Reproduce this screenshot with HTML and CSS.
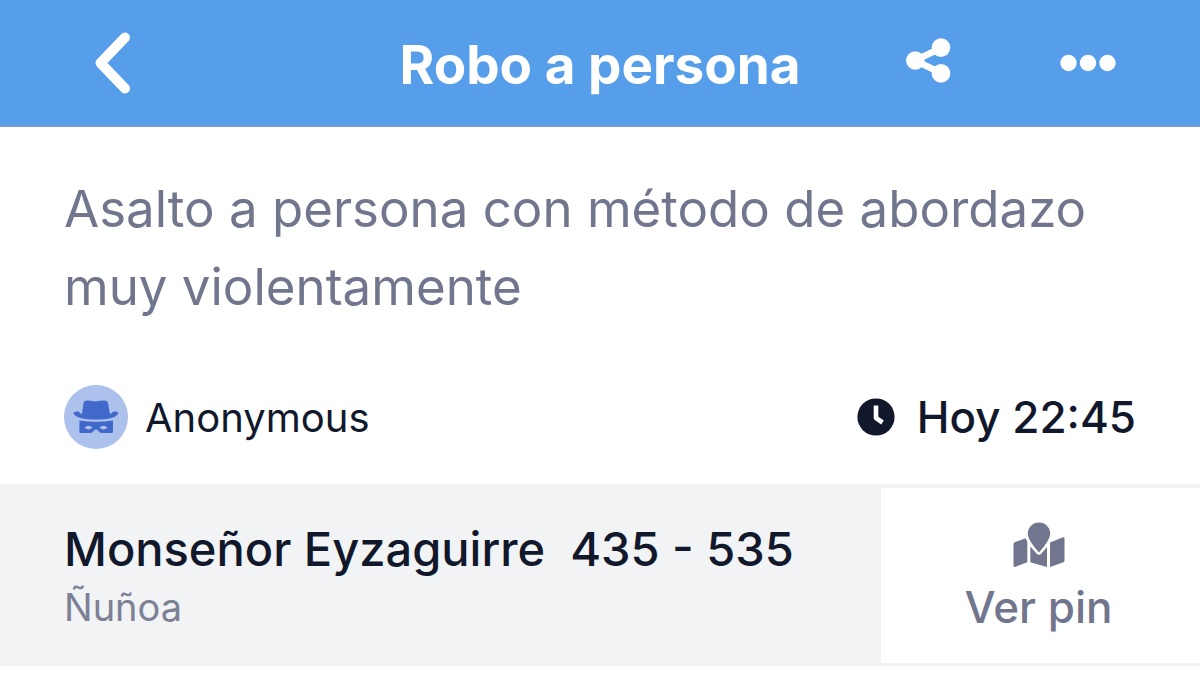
FILE: index.html
```html
<!DOCTYPE html>
<html lang="es">
<head>
<meta charset="utf-8">
<meta name="viewport" content="width=device-width, initial-scale=1">
<title>Robo a persona</title>
<link rel="stylesheet" href="styles.css">
</head>
<body>
<header class="topbar">
  <div class="topbar-start">
    <button class="icon-button" type="button" aria-label="Volver">
      <svg width="52" height="64" viewBox="0 0 52 64" fill="none" stroke="#fff" stroke-width="10" stroke-linecap="round" stroke-linejoin="round"><path d="M41 6.500 16.500 32 41 57.500"/></svg>
    </button>
  </div>
  <h1 class="title">Robo a persona</h1>
  <div class="topbar-end">
    <button class="icon-button" type="button" aria-label="Compartir">
      <svg width="46" height="50" viewBox="0 0 46 50" fill="#fff"><path d="M35 10 9 22.500 35 35" fill="none" stroke="#fff" stroke-width="6.500"/><circle cx="9.300" cy="22.500" r="9.300"/><circle cx="35" cy="9.600" r="9.300"/><circle cx="35" cy="35.400" r="9.300"/></svg>
    </button>
    <button class="icon-button" type="button" aria-label="Más opciones">
      <svg width="56" height="50" viewBox="0 0 56 50" fill="#fff"><circle cx="8.500" cy="25" r="8.200"/><circle cx="28" cy="25" r="8.200"/><circle cx="47.500" cy="25" r="8.200"/></svg>
    </button>
  </div>
</header>
<main>
  <section class="report">
    <p class="description">Asalto a persona con método de abordazo muy violentamente</p>
    <div class="meta">
      <div class="author">
        <svg width="64" height="64" viewBox="0 0 64 64" aria-hidden="true"><circle cx="32" cy="32" r="32" fill="#adc1ed"/><path fill="#4169cb" d="M18 29 19.500 18Q20 15.500 22.500 15.500 27 15.500 31.500 16.500 36 15.500 41 15.500 43.500 15.500 44 18L46 29Q48 28.500 49 26.700 54.500 26.200 54.300 28.500 51 34.500 32 34.500T9.500 28.500Q9.500 26.200 15 26.700 16 28.500 18 29Z"/><path fill="#4169cb" fill-rule="evenodd" d="M15.500 35.500Q32 38 49 35.500L49 46.500Q49 48 47 48H38.500Q36 48 34.800 46.500L33.500 45Q32 44 30.500 45L29.200 46.500Q28 48 25.500 48H17.500Q15.300 48 15.300 46.500ZM20.500 42.500Q24.500 46.700 28.500 42.500 24.500 39 20.500 42.500ZM35.500 42.500Q39.500 46.700 43.500 42.500 39.500 39 35.500 42.500Z"/></svg>
        <span>Anonymous</span>
      </div>
      <div class="time">
        <svg width="38" height="38" viewBox="0 0 38 38" aria-hidden="true"><circle cx="19" cy="19" r="18.600" fill="#11182b"/><path d="M19 7.500V20L25.500 24.500" fill="none" stroke="#fff" stroke-width="4.600" stroke-linejoin="round"/></svg>
        <time datetime="22:45">Hoy 22:45</time>
      </div>
    </div>
  </section>
  <section class="location">
    <div class="address">
      <h2 class="street">Monseñor Eyzaguirre&nbsp; 435 - 535</h2>
      <p class="district">Ñuñoa</p>
    </div>
    <button class="pin-button" type="button">
      <svg width="52" height="46" viewBox="0 0 52 46" fill="#71768e" aria-hidden="true"><path d="M26 .5A11 11 0 0 0 14.800 11.500C14.800 17 21 25 26 30.500 31 25 37.200 17 37.200 11.500A11 11 0 0 0 26 .5Z"/><path d="M.5 22Q.5 20.700 1.700 20.300L12.500 16.200 14.300 19.500V40.300L2 45Q.5 45.300.5 43.500ZM17.300 24.500 23.500 31.500Q26 34 28.500 31.500L34 25V45L17.300 40.300ZM37 20.500 50 15.300Q51.500 15 51.500 16.500V38.500Q51.500 39.700 50.500 40.200L37 45Z"/></svg>
      <span>Ver pin</span>
    </button>
  </section>
</main>
</body>
</html>
```
FILE: styles.css
```css
* {
  box-sizing: border-box;
}

body {
  margin: 0;
  background: #fff;
  color: #11182b;
  font-family: Inter, "Liberation Sans", sans-serif;
}

h1, h2, p {
  margin: 0;
}

button {
  border: 0;
  padding: 0;
  background: none;
  font: inherit;
  cursor: pointer;
}

svg {
  display: block;
}

.topbar {
  display: grid;
  grid-template-columns: 1fr auto 1fr;
  align-items: center;
  padding: 24px 84px 23px;
  border-bottom: 2px solid #6b9cd8;
  background: #569ee9;
}

.topbar-start,
.topbar-end {
  display: flex;
  align-items: center;
}

.topbar-end {
  justify-content: flex-end;
  gap: 108px;
}

.title {
  padding-top: 4px;
  color: #fff;
  font-size: 53px;
  font-weight: 700;
  line-height: 74px;
}

.report {
  padding: 43px 64px 35px;
}

.description {
  color: #71768e;
  font-size: 51px;
  line-height: 78px;
}

.meta {
  display: flex;
  align-items: center;
  justify-content: space-between;
  margin-top: 59px;
}

.author {
  display: flex;
  align-items: center;
  gap: 17px;
  font-size: 40px;
}

.time {
  display: flex;
  align-items: center;
  gap: 22px;
  font-size: 44px;
  font-weight: 500;
}

.location {
  display: grid;
  grid-template-columns: 1fr 319px;
  padding: 4px 0 3px;
  background: #f2f3f5;
}

.address {
  padding: 31px 64px 28px;
}

.street {
  font-size: 47px;
  font-weight: 500;
  line-height: 60px;
}

.district {
  color: #7d8196;
  font-size: 38px;
  line-height: 56px;
}

.pin-button {
  display: flex;
  flex-direction: column;
  align-items: center;
  padding: 34px 4px 20px 0;
  gap: 12px;
  background: #fff;
  color: #71768e;
  font-size: 44px;
  font-weight: 500;
  line-height: 54px;
}
```
